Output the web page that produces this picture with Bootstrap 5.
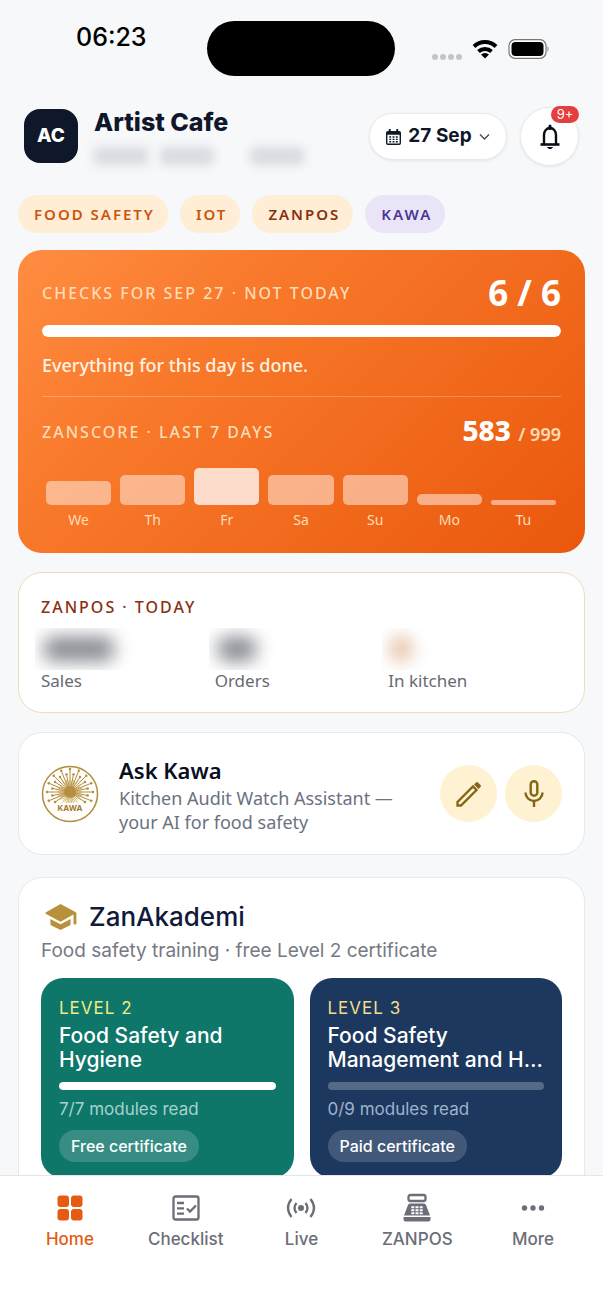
<!DOCTYPE html>
<html lang="en">
<head>
<meta charset="utf-8">
<meta name="viewport" content="width=device-width, initial-scale=1">
<title>Artist Cafe</title>
<link href="https://cdn.jsdelivr.net/npm/bootstrap@5.3.0/dist/css/bootstrap.min.css" rel="stylesheet">
<style>
:root{--plex:"Noto Sans","Open Sans",sans-serif;--inter:Inter,Roboto,sans-serif}
body{background:#f6f8fa;font-family:var(--plex);color:#0f172a;padding-bottom:100px}
svg{display:block;flex:none}
.inter{font-family:var(--inter)}
.statusbar{height:95px;padding:21px 53px 0 76px;color:#000}
.clock{font-size:25px;line-height:32px;font-weight:500;flex:1 1 0;margin-right:-24px}
.island{width:188px;height:55px;border-radius:28px;background:#000}
.signal{flex:1 1 0;height:55px}
.dots{gap:2px}
.dots i{width:6px;height:6px;border-radius:3px;background:#c4c5c7}
.topbar{padding:12px 24px 0;height:92px}
.avatar{width:54px;height:54px;margin-top:2px;border-radius:16px;background:#0f172a;color:#fff;font-size:19px;font-weight:800}
.venue{font-size:25px;line-height:30px;font-weight:800}
.hidden-line{height:22px;gap:12px;padding:2px 0;margin-top:8px;filter:blur(5px)}
.hidden-line span{height:18px;width:54px;background:#d9dce0;border-radius:4px}
.pill{background:#fff;border:1px solid #e8eaed;box-shadow:0 1px 3px rgba(15,23,42,.08);color:#0f172a}
.datebtn{height:47px;width:138px;margin:6px 13px 0 0;font-size:19px;font-weight:700;gap:7px}
.bell{width:59px;height:59px}
.count{top:-2px;right:-1px;height:17px;width:28px;background:#e53e3e;color:#fff;font-size:13px;line-height:17px;border-radius:9px}
.chips{gap:12px;padding:0 18px}
.chip{height:38px;border-radius:19px;padding:0 13px 0 16px;font-size:15px;font-weight:600;letter-spacing:2px;background:#ffedd5;color:#c9560c;text-decoration:none}
.chip.rust{color:#8a2f10}
.chip.violet{background:#e9e5f6;color:#4a3596}
.content{padding:17px 18px 0;gap:19px}
.panel{border-radius:24px;background:#fff;border:1px solid #e5e8ec;padding:22px}
.score{background:linear-gradient(135deg,#ff8d42 0%,#f97a2c 30%,#ea580c 100%);border:0;padding:24px 24px 23px;color:#fff}
.caps{font-size:16px;line-height:24px;font-weight:500;letter-spacing:2px}
.cream{color:#ffdcb8}
.rust-text{color:#8a2f10}
.big{font-size:35px;line-height:38px;font-weight:700}
.track{height:12px;border-radius:6px;background:rgba(255,255,255,.25)}
.track .progress-bar{background:#fff;border-radius:6px}
.score .track{margin-top:13px}
.done{margin-top:15px;font-size:18px;line-height:26px;font-weight:500;color:#fff3e2}
.rule{height:1px;margin:18px 0 15px;background:rgba(255,255,255,.25)}
.points{font-size:28px;line-height:36px;font-weight:800}
.points small{font-size:18px;font-weight:600;color:#ffdcb8}
.bars{gap:9px;padding:0 5px 0 4px}
.bars .stack{height:37px}
.bars .bar{border-radius:5px;background:rgba(255,225,210,.6)}
.bars .best{background:#fddccb}
.bars span{font-size:14px;line-height:20px;margin-top:5px;color:#ffdcb8}
.sales{border-color:#eedcbd;padding-bottom:20px}
.figures{margin-top:9px}
.smudge{height:42px;width:130px;margin-left:-6px;padding-left:9px;overflow:hidden}
.smudge i{width:70px;height:24px;border-radius:8px;filter:blur(9px);background:#85888f}
.smudge .mid{width:38px}
.smudge .low{width:20px;background:#e2b899}
.tag{font-size:17px;line-height:22px;color:#666a73}
.ask{padding-top:20px;padding-bottom:20px}
.ask h2{font-size:22px;line-height:26px;margin-bottom:3px;font-weight:600;color:#0a0f1f}
.ask p{font-size:18px;line-height:24px;color:#6b7280}
.round{width:57px;height:57px;border-radius:50%;background:#fff2d2;border:0;color:#846514}
.academy{margin-top:3px}
.academy h2{font-size:26px;line-height:34px;font-weight:500;color:#111a3a}
.sub{margin:5px 0 15px;font-size:19px;line-height:24px;color:#757983}
.tile{border-radius:22px;padding:18px;height:200px;color:#fff;background:#0f766a;text-decoration:none}
.tile.navy{background:#1c385f}
.tile .lvl{font-size:17px;line-height:24px;letter-spacing:1px;color:#f0ea85}
.tile.navy .lvl{color:#f4dc8c}
.tile h3{margin:4px 0 0;font-size:21px;line-height:24px;font-weight:500;white-space:nowrap}
.tile .track{height:8px;margin-top:10px}
.tile .read{font-size:17px;line-height:22px;margin-top:8px;color:#a5d3cc}
.tile.navy .read{color:#9fb2cd}
.cert{height:32px;border-radius:16px;padding:0 12px;margin-top:10px;font-size:16px;font-weight:500;background:rgba(255,255,255,.17)}
.tabs{background:#fff;border-top:1px solid #e3e5e8;height:136px;padding:16px 12px 0}
.tabs a{color:#6b6e78;font-size:17px;line-height:22px;font-weight:500;text-decoration:none;gap:4px;flex:1 1 0}
.tabs svg{height:32px}
.tabs a.active{color:#e55b13}
</style>
</head>
<body>
<div class="statusbar d-flex">
  <div class="clock inter">06:23</div>
  <div class="island"></div>
  <div class="signal d-flex align-items-center justify-content-end">
    <div class="dots d-flex pt-3 me-2"><i></i><i></i><i></i><i></i></div>
    <svg class="me-2" width="30" height="20" viewBox="0 0 30 20" fill="none" stroke="#000" stroke-width="4"><path d="M4 7.500a16 16 0 0 1 22 0M8.500 12.500a9.500 9.500 0 0 1 13 0"/><path d="M11 15.500a6 6 0 0 1 8 0L15 19.500z" fill="#000" stroke="none"/></svg>
    <svg width="42" height="20" viewBox="0 0 42 20"><rect x="1" y=".7" width="37" height="18.600" rx="6" fill="#fff" stroke="#777" stroke-width="1.200"/><rect x="3.500" y="3" width="32" height="14" rx="4"/><path d="M39.500 7q2 3 0 6z" fill="#777"/></svg>
  </div>
</div>
<header class="topbar d-flex align-items-start">
  <div class="avatar inter d-flex align-items-center justify-content-center">AC</div>
  <div class="ms-3 flex-grow-1">
    <h1 class="venue inter mb-0">Artist Cafe</h1>
    <div class="hidden-line d-flex"><span></span><span></span><span class="ms-4"></span></div>
  </div>
  <button class="pill datebtn inter rounded-pill d-flex align-items-center justify-content-center p-0" type="button">
    <svg width="15" height="16" viewBox="0 0 16 17"><path fill="#0f172a" fill-rule="evenodd" d="M3 0h2v2h6V0h2v2h1q2 0 2 2v11q0 2-2 2H2q-2 0-2-2V4q0-2 2-2h1zM1.500 6v9.300h13V6z"/><path stroke="#0f172a" stroke-width="1.500" stroke-dasharray="2 1.500" d="M3.500 8.500h9M3.500 11h9M3.500 13.500h9"/></svg>
    27 Sep
    <svg width="11" height="8" viewBox="0 0 11 8" fill="none" stroke="#42464f" stroke-width="1.300"><path d="M1 1.500l4.500 4.500L10 1.500"/></svg>
  </button>
  <button class="pill bell inter rounded-circle position-relative d-flex align-items-center justify-content-center p-0" type="button" aria-label="Notifications">
    <svg width="20" height="26" viewBox="0 0 20 26" fill="none" stroke="#0a0e18" stroke-width="2.400"><path d="M4 20v-9a6 7 0 0 1 12 0v9"/><path d="M.5 20.500h19" stroke-width="2.600"/><path d="M10 4.500V2" stroke-width="3" stroke-linecap="round"/><path d="M7.500 23.500h5q-2.500 2.500-5 0z" fill="#0a0e18" stroke-width="1"/></svg>
    <span class="count position-absolute">9+</span>
  </button>
</header>
<nav class="chips d-flex mt-2" aria-label="Modules">
  <a href="#" class="chip d-flex align-items-center">FOOD SAFETY</a>
  <a href="#" class="chip d-flex align-items-center">IOT</a>
  <a href="#" class="chip rust d-flex align-items-center">ZANPOS</a>
  <a href="#" class="chip violet d-flex align-items-center">KAWA</a>
</nav>
<main class="content d-flex flex-column">
  <section class="panel score">
    <div class="d-flex justify-content-between align-items-center"><span class="caps cream">CHECKS FOR SEP 27 · NOT TODAY</span><span class="big">6 / 6</span></div>
    <div class="progress track" role="progressbar" aria-label="Checks"><div class="progress-bar" style="width:100%"></div></div>
    <div class="done">Everything for this day is done.</div>
    <div class="rule"></div>
    <div class="d-flex justify-content-between align-items-center"><span class="caps cream">ZANSCORE · LAST 7 DAYS</span><span class="points">583 <small>/ 999</small></span></div>
    <div class="bars d-flex mt-3 text-center">
      <div class="flex-fill w-100"><div class="stack d-flex align-items-end"><div class="bar w-100" style="height:24px"></div></div><span class="d-block">We</span></div>
      <div class="flex-fill w-100"><div class="stack d-flex align-items-end"><div class="bar w-100" style="height:30px"></div></div><span class="d-block">Th</span></div>
      <div class="flex-fill w-100"><div class="stack d-flex align-items-end"><div class="bar best w-100" style="height:37px"></div></div><span class="d-block">Fr</span></div>
      <div class="flex-fill w-100"><div class="stack d-flex align-items-end"><div class="bar w-100" style="height:30px"></div></div><span class="d-block">Sa</span></div>
      <div class="flex-fill w-100"><div class="stack d-flex align-items-end"><div class="bar w-100" style="height:30px"></div></div><span class="d-block">Su</span></div>
      <div class="flex-fill w-100"><div class="stack d-flex align-items-end"><div class="bar w-100" style="height:11px"></div></div><span class="d-block">Mo</span></div>
      <div class="flex-fill w-100"><div class="stack d-flex align-items-end"><div class="bar w-100" style="height:5px"></div></div><span class="d-block">Tu</span></div>
    </div>
  </section>

  <section class="panel sales">
    <div class="caps rust-text">ZANPOS · TODAY</div>
    <div class="row g-0 figures">
      <div class="col-4"><div class="smudge d-flex align-items-center"><i></i></div><div class="tag">Sales</div></div>
      <div class="col-4"><div class="smudge d-flex align-items-center"><i class="mid"></i></div><div class="tag">Orders</div></div>
      <div class="col-4"><div class="smudge d-flex align-items-center"><i class="low"></i></div><div class="tag">In kitchen</div></div>
    </div>
  </section>

  <section class="panel ask d-flex align-items-center">
    <svg id="logo" width="58" height="58" viewBox="0 0 58 58" fill="none" stroke="#b18c40"><circle cx="29" cy="29" r="27.500" stroke-width="1.500" fill="#fffefb"/></svg>
    <div class="flex-grow-1 ms-3 ps-1 pt-1">
      <h2>Ask Kawa</h2>
      <p class="mb-0">Kitchen Audit Watch Assistant —<br>your AI for food safety</p>
    </div>
    <button class="round d-flex align-items-center justify-content-center p-0" type="button" aria-label="Write"><svg width="26" height="26" viewBox="0 0 26 26" fill="none" stroke="currentColor" stroke-width="2.300"><path d="M1.500 24.500v-3.500L17 5.500l3.500 3.500-15.500 15.500z"/><path d="M18 3.500l2-2q1-1 2 0l2.500 2.500q1 1 0 2l-2 2z" fill="currentColor" stroke="none"/></svg></button>
    <button class="round d-flex align-items-center justify-content-center p-0 ms-2" type="button" aria-label="Speak"><svg width="20" height="27" viewBox="0 0 20 27" fill="none" stroke="currentColor" stroke-width="2.400"><rect x="6.700" y="1.200" width="6.600" height="14.500" rx="3.300"/><path d="M1.500 12.500a8.500 8.500 0 0 0 17 0M10 21v6"/></svg></button>
  </section>

  <section class="panel academy inter">
    <div class="d-flex align-items-center">
      <svg width="32" height="26" viewBox="0 0 33 27" class="ms-1" fill="#b8913a"><path d="M16 0L1 8.500q-1.500 1 0 2L16 18.500l13.500-7.500V20q0 1.500 1.500 1.500T32.500 20V10q0-1-1-1.700z"/><path d="M5.500 15.500v5q0 1 1 1.700L16 27l9.500-4.800q1-.7 1-1.700v-5L16 21z"/></svg>
      <h2 class="mb-0 ms-2 ps-1">ZanAkademi</h2>
    </div>
    <div class="sub">Food safety training · free Level 2 certificate</div>
    <div class="row gx-3">
      <div class="col-6"><a href="#" class="tile d-block">
        <div class="lvl">LEVEL 2</div><h3>Food Safety and<br>Hygiene</h3>
        <div class="progress track"><div class="progress-bar" style="width:100%"></div></div>
        <div class="read">7/7 modules read</div><span class="cert d-inline-flex align-items-center">Free certificate</span></a></div>
      <div class="col-6"><a href="#" class="tile navy d-block">
        <div class="lvl">LEVEL 3</div><h3>Food Safety<br>Management and H…</h3>
        <div class="progress track"><div class="progress-bar" style="width:0%"></div></div>
        <div class="read">0/9 modules read</div><span class="cert d-inline-flex align-items-center">Paid certificate</span></a></div>
    </div>
  </section>
</main>
<nav class="tabs inter fixed-bottom d-flex" aria-label="Main">
  <a href="#" class="active d-flex flex-column align-items-center"><svg width="26" viewBox="0 -3 26 32" fill="currentColor"><rect x=".5" y=".5" width="11.500" height="11.500" rx="3"/><rect x="14" y=".5" width="11.500" height="11.500" rx="3"/><rect x=".5" y="14" width="11.500" height="11.500" rx="3"/><rect x="14" y="14" width="11.500" height="11.500" rx="3"/></svg>Home</a>
  <a href="#" class="d-flex flex-column align-items-center"><svg width="28" viewBox="0 -3 28 32" fill="none" stroke="currentColor" stroke-width="2.300"><rect x="1.500" y="1.500" width="25" height="23" rx="2"/><path d="M5 8h7M5 13.300h7M5 18.600h7M15 13.500l3 3 6-6"/></svg>Checklist</a>
  <a href="#" class="d-flex flex-column align-items-center"><svg width="30" viewBox="0 -3 30 32" fill="none" stroke="currentColor" stroke-width="2.300"><circle cx="15" cy="13" r="3" fill="currentColor" stroke="none"/><path d="M10.500 8q-4 5 0 10M19.500 8q4 5 0 10M5.500 4q-7 9 0 18M24.500 4q7 9 0 18"/></svg>Live</a>
  <a href="#" class="d-flex flex-column align-items-center"><svg width="28" viewBox="0 -2 28 32"><rect x="5.500" y="1" width="17" height="6" rx="2" fill="none" stroke="currentColor" stroke-width="2.300"/><path fill="currentColor" d="M7 9.500h14q1.500 0 2 1.500l4 10.500H1L5 11q.5-1.500 2-1.500zM.5 23h27v2.500q0 2-2 2h-23q-2 0-2-2z"/><path stroke="#fff" stroke-width="2" stroke-dasharray="3 1.200" d="M8.300 13.200h12M8.300 16.200h12M8.300 19.200h12"/></svg>ZANPOS</a>
  <a href="#" class="d-flex flex-column align-items-center"><svg width="24" viewBox="0 0 24 32" fill="currentColor"><circle cx="3.500" cy="16" r="2.700"/><circle cx="12" cy="16" r="2.700"/><circle cx="20.500" cy="16" r="2.700"/></svg>More</a>
</nav>
<script src="https://cdn.jsdelivr.net/npm/bootstrap@5.3.0/dist/js/bootstrap.bundle.min.js"></script>
<script>
// Radial starburst of the Kawa emblem
const logo=document.getElementById('logo');let rays='';
for(let i=0;i<32;i++){const a=Math.PI*2*i/32,r=i%2?18:23;if(Math.sin(a)>.6)continue;
const x=29+r*Math.cos(a),y=27+r*Math.sin(a);rays+=`<path d="M29 27L${x} ${y}" stroke-width="1"/><circle cx="${x}" cy="${y}" r="1.200" fill="#b18c40" stroke="none"/>`}
for(let i=0;i<40;i++){const a=Math.PI*2*i/40,r=i%2?11:13;rays+=`<path d="M29 27L${29+r*Math.cos(a)} ${27+r*Math.sin(a)}" stroke="#c9a555" stroke-width=".8"/>`}
logo.innerHTML+=rays+'<circle cx="29" cy="27" r="6" fill="#b18c40" stroke="none" opacity=".9"/><path d="M17 38h24v9H17z" fill="#fffefb" stroke="none"/><text x="29" y="45.500" text-anchor="middle" font-family="Inter,sans-serif" font-size="8" font-weight="700" fill="#a17c31" stroke="none">KAWA</text>';
</script>
</body>
</html>
